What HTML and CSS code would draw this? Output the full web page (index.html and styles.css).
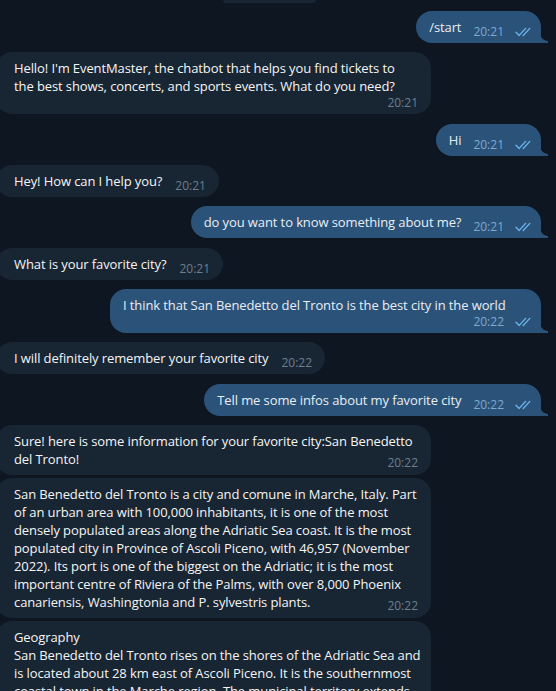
FILE: index.html
```html
<!DOCTYPE html>
<html lang="en">
<head>
<meta charset="utf-8">
<title>EventMaster chat</title>
<link rel="stylesheet" href="styles.css">
</head>
<body>
<div class="chat">
  <div class="service"></div>

  <div class="bubble out line first">
    <span class="text">/start</span>
    <span class="meta"><span class="time">20:21</span><svg class="checks" viewBox="0 0 17 10"><path d="M1 5.2 L4.2 8.4 L10.6 1.4 M8.2 8.2 L8.4 8.4 L14.8 1.4"/></svg></span>
  </div>

  <div class="bubble in wide">
    <p class="text">Hello! I'm EventMaster, the chatbot that helps you find tickets to<br>the best shows, concerts, and sports events. What do you need?</p>
    <div class="trow"><span class="time">20:21</span></div>
  </div>

  <div class="bubble out line">
    <span class="text">Hi</span>
    <span class="meta"><span class="time">20:21</span><svg class="checks" viewBox="0 0 17 10"><path d="M1 5.2 L4.2 8.4 L10.6 1.4 M8.2 8.2 L8.4 8.4 L14.8 1.4"/></svg></span>
  </div>

  <div class="bubble in line">
    <span class="text">Hey! How can I help you?</span>
    <span class="meta"><span class="time">20:21</span></span>
  </div>

  <div class="bubble out line">
    <span class="text">do you want to know something about me?</span>
    <span class="meta"><span class="time">20:21</span><svg class="checks" viewBox="0 0 17 10"><path d="M1 5.2 L4.2 8.4 L10.6 1.4 M8.2 8.2 L8.4 8.4 L14.8 1.4"/></svg></span>
  </div>

  <div class="bubble in line">
    <span class="text">What is your favorite city?</span>
    <span class="meta"><span class="time">20:21</span></span>
  </div>

  <div class="bubble out owide">
    <p class="text">I think that San Benedetto del Tronto is the best city in the world</p>
    <div class="trow"><span class="time">20:22</span><svg class="checks" viewBox="0 0 17 10"><path d="M1 5.2 L4.2 8.4 L10.6 1.4 M8.2 8.2 L8.4 8.4 L14.8 1.4"/></svg></div>
  </div>

  <div class="bubble in line">
    <span class="text">I will definitely remember your favorite city</span>
    <span class="meta"><span class="time">20:22</span></span>
  </div>

  <div class="bubble out line">
    <span class="text">Tell me some infos about my favorite city</span>
    <span class="meta"><span class="time">20:22</span><svg class="checks" viewBox="0 0 17 10"><path d="M1 5.2 L4.2 8.4 L10.6 1.4 M8.2 8.2 L8.4 8.4 L14.8 1.4"/></svg></span>
  </div>

  <div class="bubble in wide">
    <p class="text">Sure! here is some information for your favorite city:San Benedetto<br>del Tronto!<span class="time ftime">20:22</span></p>
  </div>

  <div class="bubble in wide cont">
    <p class="text">San Benedetto del Tronto is a city and comune in Marche, Italy. Part<br>of an urban area with 100,000 inhabitants, it is one of the most<br>densely populated areas along the Adriatic Sea coast. It is the most<br>populated city in Province of Ascoli Piceno, with 46,957 (November<br>2022). Its port is one of the biggest on the Adriatic; it is the most<br>important centre of Riviera of the Palms, with over 8,000 Phoenix<br>canariensis, Washingtonia and P. sylvestris plants.<span class="time ftime">20:22</span></p>
  </div>

  <div class="bubble in wide cont geo">
    <p class="text">Geography<br>San Benedetto del Tronto rises on the shores of the Adriatic Sea and<br>is located about 28 km east of Ascoli Piceno. It is the southernmost<br>coastal town in the Marche region. The municipal territory extends<br>along the coast between the mouths of the Albula and the Tronto.</p>
  </div>
</div>
</body>
</html>
```

FILE: styles.css
```css
html, body {
  margin: 0;
  height: 691px;
  overflow: hidden;
  background: #0e1621;
}

body {
  font-family: "Open Sans", "Noto Sans", sans-serif;
  font-size: 13px;
  color: #f5f5f5;
}

.chat {
  display: flex;
  flex-direction: column;
  align-items: flex-start;
}

.service {
  width: 93px;
  height: 3px;
  margin-left: 223px;
  background: #182533;
  border-radius: 0 0 10px 10px;
}

.bubble {
  position: relative;
  box-sizing: border-box;
  padding: 7px 13px;
  border-radius: 16px;
  line-height: 18px;
  margin-top: 9.33px;
}

.bubble.first {
  margin-top: 8px;
}

.bubble.cont {
  margin-top: 3px;
}

.text {
  margin: 0;
  white-space: nowrap;
  letter-spacing: -0.1px;
}

.in {
  align-self: flex-start;
  background: #182533;
  margin-left: -4px;
  padding-left: 18px;
  color: #f5f5f5;
}

.out {
  align-self: flex-end;
  background: #2b5278;
  margin-right: 15px;
  padding-right: 9px;
  border-bottom-right-radius: 0;
  color: #e8eef4;
}

.out::after {
  content: "";
  position: absolute;
  right: -7px;
  bottom: 0;
  width: 8px;
  height: 10px;
  background: radial-gradient(circle at 100% 0, transparent 7.5px, #2b5278 8.2px);
}

.line {
  display: flex;
  align-items: flex-end;
}

.meta {
  display: flex;
  align-items: center;
  margin-left: 12px;
  margin-bottom: -3px;
  line-height: 14px;
}

.in .meta {
  margin-left: 13px;
}

.time {
  font-size: 12px;
  letter-spacing: 0;
  color: #6d7f8f;
}

.out .time {
  color: #7ea9d3;
}

.checks {
  width: 17px;
  height: 10px;
  margin-left: 11px;
  fill: none;
  stroke: #6cb3ee;
  stroke-width: 1.4;
  stroke-linecap: round;
  stroke-linejoin: round;
}

.wide {
  width: 435px;
  display: flow-root;
}

.owide {
  width: 431px;
}

.trow {
  display: flex;
  justify-content: flex-end;
  align-items: flex-start;
  height: 12px;
  line-height: 16px;
}

.trow .checks {
  margin-top: 3px;
}

.ftime {
  float: right;
  margin-left: 12px;
  padding-top: 6px;
  line-height: 14px;
  margin-bottom: -2px;
}
```
